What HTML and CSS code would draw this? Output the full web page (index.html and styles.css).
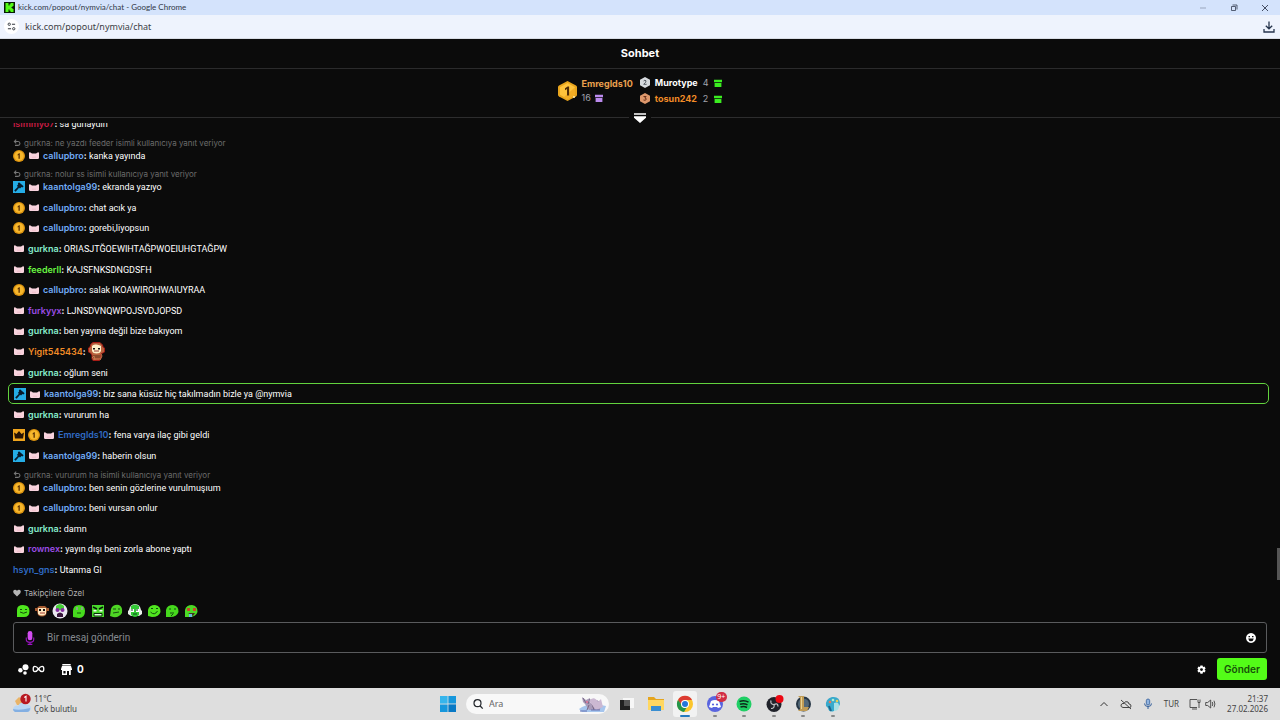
FILE: index.html
```html
<!DOCTYPE html>
<html lang="tr">
<head>
<meta charset="utf-8">
<title>kick.com/popout/nymvia/chat</title>
<link rel="stylesheet" href="styles.css">
</head>
<body>
<svg class="sprite" aria-hidden="true">
  <symbol id="reply" viewBox="0 0 8 8"><path d="M1.5 2.5H5a1.9 1.9 0 0 1 0 3.9H2M3.2.7 1.4 2.5l1.8 1.8" fill="none" stroke="#777" stroke-width="1.1"/></symbol>
  <symbol id="coin" viewBox="0 0 12 12"><circle cx="6" cy="6" r="6" fill="#dd9410"/><circle cx="6" cy="6" r="4.7" fill="#f7b72c"/><path d="M4.6 4.4 6 3.3h.8v5.4H5.5V5l-.9.5z" fill="#5a3005"/></symbol>
  <symbol id="pig" viewBox="0 0 10 7"><path d="M0 1Q.1 0 1 .2L3 1.500h4L9 .2q.9-.2 1 .8v4.800Q10 7 8.800 7H1.200Q0 7 0 5.800z" fill="#f8d3dd"/><path d="M3 4.500h4V6H3z" fill="#f3c4d0"/></symbol>
  <symbol id="mod" viewBox="0 0 12 12"><path d="M0 0h12v12H0z" fill="#25ade6"/><path d="m6 1.200 4.600 4-1.100 1.200-1-.3L7 7.500l-.9-.7-3.500 4-1.400-1.200 3.700-3.800-1-.9 1.300-1.600-.4-.9z" fill="#071b2b"/></symbol>
  <symbol id="crown" viewBox="0 0 12 12"><path d="M0 0h12v12H0z" fill="#f0a51d"/><path d="m1 3.400 2.500 1.700L6 2l2.500 3.100L11 3.400 10 9.500H2z" fill="#281403"/></symbol>
  <symbol id="gift" viewBox="0 0 8 8"><path d="M0 .8h8v2.400H0zM.6 3.900h6.800V8H.6z"/></symbol>
</svg>

<header class="titlebar">
  <svg class="favicon" viewBox="0 0 11 11"><path d="M0 0h11v11H0z" fill="#071c05"/><path d="M1.500 1h3v2.500h1V2.300h1V1h3v3h-1v1h-1v1h1v1h1v3h-3V8.700h-1V7.500h-1V10h-3z" fill="#53fc18"/></svg>
  <span class="window-title">kick.com/popout/nymvia/chat - Google Chrome</span>
  <div class="window-buttons">
    <button aria-label="Simge durumuna küçült"><svg viewBox="0 0 8 8"><path d="M1 4h6" stroke="#9aa6bd" fill="none"/></svg></button>
    <button aria-label="Geri yükle"><svg viewBox="0 0 8 8"><path d="M1.500 2.500h4v4h-4zM2.500 1h4.500v4.500" stroke="#333c50" stroke-width=".8" fill="none"/></svg></button>
    <button aria-label="Kapat"><svg viewBox="0 0 8 8"><path d="m1 1 6 6m0-6L1 7" stroke="#333c50" stroke-width=".9" fill="none"/></svg></button>
  </div>
</header>
<div class="addressbar">
  <button class="site-info" aria-label="Site bilgileri"><svg viewBox="0 0 10 10"><path d="M5.500 2.500H9M1 7.500h3.500" stroke="#30343b" stroke-width="1.100"/><circle cx="2.500" cy="2.500" r="1.300" fill="none" stroke="#30343b"/><circle cx="7.500" cy="7.500" r="1.300" fill="none" stroke="#30343b"/></svg></button>
  <span class="address">kick.com/popout/nymvia/chat</span>
  <button class="download" aria-label="İndirilenler"><svg viewBox="0 0 12 12"><path d="M6 .5v7M2.800 4.700 6 7.800l3.200-3.100M1 8v3h10V8" fill="none" stroke="#26354d" stroke-width="1.300"/></svg></button>
</div>

<main class="app">
  <h1 class="app-title">Sohbet</h1>
  <section class="leaders" aria-label="Hediye sıralaması">
    <div class="first">
      <svg class="hex-large" viewBox="0 0 19 20"><path d="M9.500 0 18 4.600q1 .6 1 1.500v7.800q0 .9-1 1.500L9.500 20 1 15.400q-1-.6-1-1.500V6.100q0-.9 1-1.500z" fill="#e9a51d"/><path d="m9.500 2 7.500 4.200v7.600L9.500 18 2 13.800V6.200z" fill="#ffc33c"/><path d="m9.500 18 7.500-4.200V6.200L6 15.900z" fill="#f3ad24"/><path d="M7 7.300 9.700 5.500h1.400v9H9V8L7 9.200z" fill="#4e2b06"/><circle cx="16" cy="16" r="1" fill="#fff0b8"/></svg>
      <div><div class="leader-name gold">Emreglds10</div><div class="leader-count">16 <svg class="gift violet"><use href="#gift"/></svg></div></div>
    </div>
    <div class="others">
      <svg class="hex" viewBox="0 0 10 11"><path d="m5 0 5 2.700v5.600L5 11 0 8.300V2.700z" fill="#d7dbdf"/><path d="M3.600 4q1.400-1.500 2.400-.2.600 1-2.300 3.500h2.900" fill="none" stroke="#555c63"/></svg>
      <span class="leader-name">Murotype</span><span class="leader-count">4</span><svg class="gift green"><use href="#gift"/></svg>
      <svg class="hex" viewBox="0 0 10 11"><path d="m5 0 5 2.700v5.600L5 11 0 8.300V2.700z" fill="#dd986c"/><path d="M3.500 3.500h2.600L4.800 5q2 .2 1.300 1.700-.9 1-2.600.3" fill="none" stroke="#6b321b"/></svg>
      <span class="leader-name orange">tosun242</span><span class="leader-count">2</span><svg class="gift green"><use href="#gift"/></svg>
    </div>
  </section>
  <div class="divider"><button aria-label="Sıralamayı genişlet"><svg viewBox="0 0 12 10"><path d="M0 .3h12v1.500H0zM0 3.200h12v1.500L6 10 0 4.700z" fill="#fff"/></svg></button></div>

  <section class="chat" aria-label="Mesajlar">
    <ol class="messages">
      <li><p><b class="crimson">isimmyo7</b><b>:</b> sa günaydın</p></li>
      <li><p class="reply"><svg><use href="#reply"/></svg>gurkna: ne yazdı feeder isimli kullanıcıya yanıt veriyor</p><p><svg class="badge"><use href="#coin"/></svg><svg class="pig"><use href="#pig"/></svg><b class="blue">callupbro</b><b>:</b> kanka yayında</p></li>
      <li><p class="reply"><svg><use href="#reply"/></svg>gurkna: nolur ss isimli kullanıcıya yanıt veriyor</p><p><svg class="badge"><use href="#mod"/></svg><svg class="pig"><use href="#pig"/></svg><b class="blue">kaantolga99</b><b>:</b> ekranda yazıyo</p></li>
      <li><p><svg class="badge"><use href="#coin"/></svg><svg class="pig"><use href="#pig"/></svg><b class="blue">callupbro</b><b>:</b> chat acık ya</p></li>
      <li><p><svg class="badge"><use href="#coin"/></svg><svg class="pig"><use href="#pig"/></svg><b class="blue">callupbro</b><b>:</b> gorebi,liyopsun</p></li>
      <li><p><svg class="pig"><use href="#pig"/></svg><b class="mint">gurkna</b><b>:</b> ORIASJTĞOEWIHTAĞPWOEIUHGTAĞPW</p></li>
      <li><p><svg class="pig"><use href="#pig"/></svg><b class="lime">feederll</b><b>:</b> KAJSFNKSDNGDSFH</p></li>
      <li><p><svg class="badge"><use href="#coin"/></svg><svg class="pig"><use href="#pig"/></svg><b class="blue">callupbro</b><b>:</b> salak IKOAWIROHWAIUYRAA</p></li>
      <li><p><svg class="pig"><use href="#pig"/></svg><b class="purple">furkyyx</b><b>:</b> LJNSDVNQWPOJSVDJOPSD</p></li>
      <li><p><svg class="pig"><use href="#pig"/></svg><b class="mint">gurkna</b><b>:</b> ben yayına değil bize bakıyom</p></li>
      <li><p><svg class="pig"><use href="#pig"/></svg><b class="orange">Yigit545434</b><b>:</b> <svg class="monkey" viewBox="0 0 17 19"><path d="M3 2 5 .5h7L14.500 3l.5 2 1.500 1v4l-1.800 1L13 12v4l-1.500 2.500H5L4 17v-4L2.500 11 .5 10V6L2 5z" fill="#b9623e" stroke="#a71c16"/><path d="M4 4q1-2 4.500-1.500T13 4v5q-1 2.500-4.500 2.500T4 9z" fill="#fff0c9"/><path d="M5 6h2v1.500H5zm5 0h2v1.500h-2z" fill="#171214"/><path d="M6 9h5" stroke="#943633"/><path d="M5 13h7v3H5z" fill="#8b4b2c"/><path d="m4 16 2-2 1 4m6-6 1 2-2 4" fill="none" stroke="#c67a50"/></svg></p></li>
      <li><p><svg class="pig"><use href="#pig"/></svg><b class="mint">gurkna</b><b>:</b> oğlum seni</p></li>
      <li class="mention"><p><svg class="badge"><use href="#mod"/></svg><svg class="pig"><use href="#pig"/></svg><b class="blue">kaantolga99</b><b>:</b> biz sana küsüz hiç takılmadın bizle ya @nymvia</p></li>
      <li><p><svg class="pig"><use href="#pig"/></svg><b class="mint">gurkna</b><b>:</b> vururum ha</p></li>
      <li><p><svg class="badge"><use href="#crown"/></svg><svg class="badge"><use href="#coin"/></svg><svg class="pig"><use href="#pig"/></svg><b class="royal">Emreglds10</b><b>:</b> fena varya ilaç gibi geldi</p></li>
      <li><p><svg class="badge"><use href="#mod"/></svg><svg class="pig"><use href="#pig"/></svg><b class="blue">kaantolga99</b><b>:</b> haberin olsun</p></li>
      <li><p class="reply"><svg><use href="#reply"/></svg>gurkna: vururum ha isimli kullanıcıya yanıt veriyor</p><p><svg class="badge"><use href="#coin"/></svg><svg class="pig"><use href="#pig"/></svg><b class="blue">callupbro</b><b>:</b> ben senin gözlerine vurulmuşıum</p></li>
      <li><p><svg class="badge"><use href="#coin"/></svg><svg class="pig"><use href="#pig"/></svg><b class="blue">callupbro</b><b>:</b> beni vursan onlur</p></li>
      <li><p><svg class="pig"><use href="#pig"/></svg><b class="mint">gurkna</b><b>:</b> damn</p></li>
      <li><p><svg class="pig"><use href="#pig"/></svg><b class="purple">rownex</b><b>:</b> yayın dışı beni zorla abone yaptı</p></li>
      <li><p><b class="royal">hsyn_gns</b><b>:</b> Utanma Gl</p></li>
    </ol>
    <span class="scroll-thumb"></span>
  </section>

  <form class="composer">
    <p class="mode"><svg viewBox="0 0 8 8"><path d="M4 7.500.7 4.200C-1 1.500 2-.5 4 1.700 6-.5 9 1.500 7.300 4.200z" fill="#b5b5b5"/></svg>Takipçilere Özel</p>
    <div class="emotes">
      <button type="button" aria-label="Gülümseme"><svg viewBox="0 0 14 14"><path d="M1 13V6q0-5 6-5 6.500 0 6.500 6T8 13z" fill="#4ee61d"/><path d="M4 5.500h2m3 0h2M4 8q3.500 2.500 7 0" stroke="#164c0d" fill="none"/></svg></button>
      <button type="button" aria-label="Maymun"><svg viewBox="0 0 14 14"><path d="M0 4h2l2-2h6l2 2h2v3h-2l-1 4q-4 3-8 0L2 7H0z" fill="#a55b31"/><path d="M3 4h8v6q-4 3-8 0z" fill="#ffe6bd"/><path d="M4 5h2v2H4zm4 0h2v2H8z" fill="#171011"/><path d="M5 9h5" stroke="#a43d32"/></svg></button>
      <button type="button" aria-label="Şaşkın"><svg viewBox="0 0 14 14"><circle cx="7" cy="7" r="7.500" fill="#e9e7ef"/><path d="M3 2q4-4 8 0v4H3z" fill="#46cf37"/><circle cx="4.500" cy="6" r="2" fill="#812c9d"/><circle cx="9.500" cy="6" r="2" fill="#812c9d"/><path d="M4 10q3-3 6 0v3H4z" fill="#36153a"/></svg></button>
      <button type="button" aria-label="Bakan"><svg viewBox="0 0 14 14"><path d="M1 13V7q0-6 6-6 6 0 6 6 0 7-6 7z" fill="#46db1d"/><path d="M4 3h2v3H4zm5 0h2v3H9z" fill="#fff"/><path d="M5 3v3m5-3v3M5 9h4" stroke="#104e0c"/></svg></button>
      <button type="button" aria-label="Kızgın"><svg viewBox="0 0 14 14"><path d="M1 1h12v12H1z" fill="#49d92c"/><path d="m2 3 4 2m6-2L8 5" stroke="#081b09" stroke-width="1.500"/><path d="M2.500 6h3v1.500h-3zm6 0h3v1.500h-3z" fill="#f2fff0"/><path d="M3 9.500h8V12H3z" fill="#e5ffe2" stroke="#082c08"/></svg></button>
      <button type="button" aria-label="Düşünceli"><svg viewBox="0 0 14 14"><path d="M1 12 2 5q2-5 8-4 4 2 3 8-3 5-9 4z" fill="#4ed624"/><path d="M4 5h3m2 0h2M4 9l6-1" stroke="#174d11"/></svg></button>
      <button type="button" aria-label="Kulaklıklı"><svg viewBox="0 0 14 14"><path d="M1 6q1-6 6-6t6 6l1 1v3l-3 2H3L0 10V7z" fill="#e9f0e9"/><path d="M3 2q4-3 8 0v9q-4 4-8 0z" fill="#33c936"/><path d="M3 5h3v3H3zm5 0h3v3H8z" fill="#fff"/><path d="M4 5v2m5-2v2M5 10h4" stroke="#0d421b"/></svg></button>
      <button type="button" aria-label="Sırıtan"><svg viewBox="0 0 14 14"><path d="M1 12V6q1-5 7-5 6 1 5.500 7Q12 13 5 13z" fill="#50e61f"/><path d="M4 4.500h2m3 0h2M3.500 8q4 4 7-1" fill="none" stroke="#124c10"/></svg></button>
      <button type="button" aria-label="Eli yüzünde"><svg viewBox="0 0 14 14"><path d="M1 13V6q1-5 7-5 6 1 5.500 7Q12 13 5 13z" fill="#46d91d"/><path d="M4 5h2m3 0h2M5 9h4m-3 3 2-2" fill="none" stroke="#124c10"/></svg></button>
      <button type="button" aria-label="Âşık"><svg viewBox="0 0 14 14"><path d="M1 13V6q1-5 7-5 6 1 5.500 7Q12 13 5 13z" fill="#4cda25"/><path d="M3 4h3v3H3zm6 0h3v3H9z" fill="#c7482b"/><path d="M4 9h7l-2 3z" fill="#45351f"/><path d="M5 10h3v3H5z" fill="#66bddd"/></svg></button>
    </div>
    <div class="message-box">
      <svg class="microphone" viewBox="0 0 10 15"><rect x="2.500" y="0" width="5" height="10" rx="2.500" fill="#d34df1"/><path d="M1 7v2q0 3 4 3t4-3V7M5 12v2M2.500 14.300h5" fill="none" stroke="#9d13c4" stroke-width="1.200"/></svg>
      <input type="text" aria-label="Mesaj" placeholder="Bir mesaj gönderin">
      <button type="button" aria-label="İfade ekle"><svg viewBox="0 0 10 10"><path d="m3 .5 2-.4 2 .4 2 1.500.9 2v2L9 8 7 9.600l-2 .3-2-.3L1 8 .1 6V4L1 2z" fill="#fff"/><path d="M2.500 3h1.500v1.300H2.500zM6 3h1.500v1.300H6zM2.200 5.500h5.600Q7.300 8.200 5 8.200T2.200 5.500z" fill="#111"/></svg></button>
    </div>
    <div class="actions">
      <button type="button" class="stat" aria-label="Kimlik"><svg class="dots" viewBox="0 0 11 11"><circle cx="7.500" cy="3.300" r="3" fill="#fff"/><circle cx="2.400" cy="6.300" r="2.200" fill="#fff"/><circle cx="7" cy="9" r="1.800" fill="#fff"/></svg><svg class="infinity" viewBox="0 0 12 8"><path d="M6 4C3.500.5.700.6.700 4s2.800 3.500 5.300 0 5.300-3.400 5.300 0S8.500 7.500 6 4z" fill="none" stroke="#fff" stroke-width="1.300"/></svg></button>
      <button type="button" class="stat shop"><svg viewBox="0 0 11 11"><path d="M1.300 0h8.400v1.400H1.300zM1 2h9l1 3v1H9.800v5H8V7H6v4H1V6H0V5zm1.400 5v2.500h2.200V7z" fill="#fff" fill-rule="evenodd"/></svg><span>0</span></button>
      <button type="button" class="settings" aria-label="Sohbet ayarları"><svg viewBox="0 0 10 10"><path fill="#fff" fill-rule="evenodd" d="M3.800.5h2.400l.3 1.300.7.400 1.200-.4 1.200 2-1 .9v.7l1 .9-1.200 2-1.200-.4-.7.400-.3 1.300H3.800L3.500 8.300l-.7-.4-1.200.4-1.200-2 1-.9v-.7l-1-.9 1.200-2 1.200.4.7-.4zM5 3.500a1.600 1.600 0 1 0 0 3.200 1.600 1.600 0 0 0 0-3.200z"/></svg></button>
      <button type="submit" class="send">Gönder</button>
    </div>
  </form>
</main>

<footer class="taskbar">
  <button class="weather">
    <svg viewBox="0 0 20 20"><path d="m3 7 4-4 5 4-1 4H5z" fill="#e9b468"/><path d="M3 18q-4-3 0-6 2-1 3 0 3-6 8-1 5-1 5 4-1 3-4 3z" fill="#b9d7f5"/><path d="M3 18q-2-1-2-3 6 2 17-1 0 4-3 4z" fill="#83afe2"/><circle cx="13.500" cy="5" r="5.200" fill="#b81822"/><path d="M12.300 3.500 14 2.300v5.200" fill="none" stroke="#fff" stroke-width="1.100"/></svg>
    <span>11°C<br>Çok bulutlu</span>
  </button>
  <nav class="tasks" aria-label="Görev çubuğu">
    <button class="start" aria-label="Başlat"><svg viewBox="0 0 16 16"><path d="M0 0h7.600v7.600H0z" fill="#36b5ec"/><path d="M8.400 0H16v7.600H8.400zM0 8.400h7.600V16H0z" fill="#1697dc"/><path d="M8.400 8.400H16V16H8.400z" fill="#0879c5"/></svg></button>
    <label class="search"><svg viewBox="0 0 10 10"><circle cx="4.500" cy="4.200" r="3.500" fill="none" stroke="#25282d" stroke-width="1.200"/><path d="m7 6.700 2.700 2.900" stroke="#25282d" stroke-width="1.300"/></svg><input type="search" aria-label="Ara" placeholder="Ara"><svg class="cat" viewBox="0 0 30 17"><path d="M2 13q9-7 27-3l-2 6H5z" fill="#a6c5ed"/><path d="m5 1 4 3 4-2v5l7-3q5 2 3 10H12l-4-6-2-2z" fill="#a99bb9"/><path d="m6 2 3 5m4-4-2 5m1 1-2 5m5-6 2 6" stroke="#796885"/><path d="M12 5q5-6 9 1l3-3 2 8-7 3z" fill="#cbb8d2"/><path d="M3 15h7m4-1h9" stroke="#6571b0"/><circle cx="10" cy="6" r="1" fill="#e37092"/></svg></label>
    <div class="apps">
      <button aria-label="Görev görünümü"><svg viewBox="0 0 18 18"><path d="M6 3h11v10H6z" fill="#f7f7f7"/><path d="M3 5h10v10H3z" fill="#555"/><path d="M3 5h4v6h6v4H3z" fill="#202020"/></svg></button>
      <button aria-label="Dosya Gezgini"><svg viewBox="0 0 18 18"><path d="M1 2h6l2 2h8v11H1z" fill="#e5a51e"/><path d="M1 5h16v10H1z" fill="#ffd760"/><path d="M4 11h10v5H4z" fill="#398ed1"/></svg></button>
      <button class="active" aria-label="Chrome"><svg viewBox="0 0 18 18"><circle cx="9" cy="9" r="8" fill="#fbc52b"/><path d="M2 5a8 8 0 0 1 14 0H9L6 11z" fill="#dc3b32"/><path d="M2 5a8 8 0 0 0 6 12l4-7-4 3z" fill="#23964b"/><circle cx="9" cy="9" r="4" fill="#fff"/><circle cx="9" cy="9" r="3" fill="#2476da"/></svg></button>
      <button class="open" aria-label="Discord"><svg viewBox="0 0 18 18"><circle cx="9" cy="9" r="8" fill="#5964df"/><path d="M5 6q4-2 8 0l2 6-3 1-1-1H7l-1 1-3-1z" fill="#fff"/><circle cx="7" cy="9.500" r="1.100" fill="#5964df"/><circle cx="11" cy="9.500" r="1.100" fill="#5964df"/></svg><span class="count">9+</span></button>
      <button class="open" aria-label="Spotify"><svg viewBox="0 0 18 18"><circle cx="9" cy="9" r="7.500" fill="#20cf65"/><path d="M4.500 6.500q5-1.700 9 .7M5 9.300q4-1.400 7.500.6M5.500 12q3.500-1.200 6.500.5" fill="none" stroke="#0d291a" stroke-width="1.500"/></svg></button>
      <button class="open" aria-label="OBS"><svg viewBox="0 0 18 18"><circle cx="9" cy="9.500" r="7.500" fill="#20222a"/><path d="M9 9.500q-4 0-3-4M9 9.500q4-2 4 2M9 9.500q1 4-3 4" fill="none" stroke="#c6c6ca" stroke-width="1.200"/><circle cx="14.500" cy="4" r="4" fill="#ed0712"/></svg></button>
      <button class="open" aria-label="League of Legends"><svg viewBox="0 0 18 18"><circle cx="9.500" cy="9" r="7.500" fill="#273746"/><circle cx="9.500" cy="9" r="5.500" fill="#536878"/><path d="M4 1h6v11h5l-2 4H4l2-2V3z" fill="#c09b55"/><path d="M7 2h1v12H7z" fill="#ead391"/></svg></button>
      <button class="open" aria-label="Paint"><svg viewBox="0 0 18 18"><path d="M2 11Q1 4 8 2q8-1 8 7-1 4-4 2l-2 5q-5 2-6-3z" fill="#38a9cc"/><path d="M10 8q5-2 5 3t-5 5z" fill="#a9e0e6"/><circle cx="6" cy="7" r="1.300" fill="#ec7758"/><circle cx="9" cy="5" r="1.300" fill="#b1edcb"/><circle cx="13" cy="6" r="1.300" fill="#e5cc55"/><path d="m5 11 2 5" stroke="#1d668b" stroke-width="2"/></svg></button>
    </div>
  </nav>
  <div class="tray">
    <button aria-label="Gizli simgeler"><svg viewBox="0 0 12 12"><path d="m2.500 8 3.500-3.500L9.500 8" fill="none" stroke="#333"/></svg></button>
    <button aria-label="OneDrive"><svg viewBox="0 0 12 12"><path d="M3 9.500Q.5 9 1 7t3-1.500Q5 2.500 8 4l1 2q2 0 2 2t-2 1.500zM1 2l10 9" fill="none" stroke="#444"/></svg></button>
    <button aria-label="Mikrofon"><svg viewBox="0 0 12 12"><rect x="4.300" y="1" width="3.400" height="6" rx="1.700" fill="#92b4df" stroke="#315c99" stroke-width=".8"/><path d="M2.500 5.500q0 3 3.500 3t3.500-3M6 8.500V11" fill="none" stroke="#315c99"/></svg></button>
    <button class="language">TUR</button>
    <button class="network" aria-label="Ağ ve ses"><svg viewBox="0 0 12 12"><path d="M8 1.500H1v8h7M3 11h5m1-9.500v3h2v-3m-1 3V10" fill="none" stroke="#444" stroke-width=".9"/></svg><svg viewBox="0 0 12 12"><path d="M.7 4.500h2l3-2.500v8l-3-2.500h-2zM7.300 4q1 2 0 4M9 2.700q1.800 3.300 0 6.600" fill="none" stroke="#444" stroke-width=".9"/></svg></button>
    <button class="clock">21:37<br>27.02.2026</button>
  </div>
</footer>
</body>
</html>
```
FILE: styles.css
```css
* { box-sizing: border-box; }
body {
  margin: 0;
  height: 100vh;
  display: flex;
  flex-direction: column;
  overflow: hidden;
  background: #0b0b0b;
  color: #fff;
  font: 9px/12px Inter, "Noto Sans", sans-serif;
}
button, input { font: inherit; color: inherit; border: 0; padding: 0; margin: 0; background: none; }
input { outline: 0; min-width: 0; }
p, h1, ol { margin: 0; padding: 0; }
svg { display: block; flex: none; overflow: visible; }
.sprite { position: absolute; width: 0; height: 0; }

.titlebar { display: flex; align-items: center; height: 15px; flex: none; padding: 0 11px 0 4px; gap: 3px; background: #d4e3fc; color: #303746; font: 8px/15px Lato, "Noto Sans", sans-serif; }
.favicon { width: 11px; height: 11px; }
.window-buttons { display: flex; gap: 23px; margin-left: auto; }
.window-buttons svg { width: 8px; height: 8px; }
.addressbar { display: flex; align-items: center; height: 24px; flex: none; padding: 0 5px 0 4px; gap: 6px; background: #eef3fd; border-bottom: 1px solid #d8dce4; color: #3b3e45; font: 9px/22px "Noto Sans", sans-serif; }
.site-info { width: 15px; height: 15px; border-radius: 50%; background: #fff; display: grid; place-items: center; }
.site-info svg { width: 9px; height: 9px; }
.download { margin-left: auto; }
.download svg { width: 12px; height: 12px; }

.app { flex: 1; min-height: 0; display: flex; flex-direction: column; }
.app-title { flex: none; border-bottom: 1px solid #2b2b2c; text-align: center; font-size: 11px; line-height: 29px; font-weight: 700; }
.leaders { flex: none; height: 43px; display: flex; justify-content: center; align-items: center; gap: 7px; }
.first { display: flex; align-items: center; gap: 4px; }
.hex-large { width: 19px; height: 20px; }
.leader-name { font-size: 9px; line-height: 14px; font-weight: 700; }
.leader-count { display: flex; align-items: center; gap: 4px; color: #a1a3ad; font-size: 9px; line-height: 13px; }
.others { display: grid; grid-template-columns: 10px auto auto 8px; column-gap: 5px; row-gap: 2px; align-items: center; }
.hex { width: 10px; height: 11px; }
.gift { width: 8px; height: 8px; }
.violet { fill: #bb8aed; }
.green { fill: #3bed20; }
.gold { color: #eaa04e; }
.orange { color: #f28b27; }
.divider { flex: none; height: 11px; display: flex; align-items: center; gap: 5px; }
.divider::before, .divider::after { content: ""; height: 1px; flex: 1; background: #2d2d2e; }
.divider svg { width: 12px; height: 10px; }

.chat { flex: 1; min-height: 0; position: relative; overflow: hidden; }
.messages { list-style: none; height: 100%; padding: 0 11px 5px 8px; display: flex; flex-direction: column; justify-content: space-between; }
.messages li:first-child { margin-top: -9px; }
.messages li { flex: none; padding: 4px 5px; }
.messages li > p { display: flex; align-items: center; height: 12px; white-space: pre; font-family: Roboto, "Noto Sans", sans-serif; }
.messages li > .reply { height: 11px; align-items: flex-start; color: #6c6c6c; font-family: Inter, "Noto Sans", sans-serif; font-size: 8px; line-height: 9px; gap: 3px; }
.reply svg { width: 8px; height: 8px; }
.messages .mention { padding: 4px 5px 3px; border: 1px solid #62d33e; border-radius: 5px; }
.badge { width: 12px; height: 12px; margin-right: 3px; }
.pig { width: 10px; height: 7px; margin: 0 4px 0 1px; }
.monkey { width: 17px; height: 19px; margin-left: 2px; }
.messages b { font-family: Inter, "Noto Sans", sans-serif; font-weight: 600; }
.crimson { color: #c51c43; }
.blue { color: #70aaf5; }
.mint { color: #87edcd; }
.lime { color: #69f542; }
.purple { color: #9c4de6; }
.royal { color: #306bc5; }
.scroll-thumb { position: absolute; right: 0; top: 92%; width: 3px; height: 32px; background: #555; }

.composer { flex: none; padding: 2px 13px 3px; }
.mode { display: flex; align-items: center; gap: 3px; height: 12px; color: #b2b2b2; font-size: 8px; }
.mode svg { width: 8px; height: 8px; }
.emotes { display: flex; justify-content: space-between; width: 185px; height: 23px; align-items: center; padding-left: 3px; }
.emotes svg { width: 14px; height: 14px; }
.message-box { display: flex; align-items: center; height: 31px; border: 1px solid #5a5b5d; border-radius: 3px; padding: 0 10px; font: 10px/12px Roboto, "Noto Sans", sans-serif; }
.microphone { width: 12px; height: 14px; }
.message-box input { flex: 1; margin-left: 11px; }
.message-box input::placeholder { color: #858a90; opacity: 1; }
.message-box button svg { width: 10px; height: 10px; }
.actions { display: flex; align-items: center; height: 32px; font-size: 10px; }
.stat { display: flex; align-items: center; gap: 3px; margin-left: 5px; }
.stat svg { width: 11px; height: 11px; }
.stat .infinity { width: 13px; height: 8px; }
.shop { margin-left: 16px; gap: 5px; font-weight: 700; }
.settings { margin-left: auto; margin-right: 11px; }
.settings svg { width: 9px; height: 9px; }
.send { min-width: 50px; height: 22px; border-radius: 3px; background: #53fc18; color: #174f09; font-weight: 600; }

.taskbar { flex: none; height: 32px; display: grid; grid-template-columns: 1fr auto 1fr; align-items: center; padding: 0 12px; background: #dedede; color: #444; font: 8px/10px "Noto Sans", sans-serif; }
.weather { display: flex; align-items: center; gap: 2px; text-align: left; justify-self: start; }
.weather svg { width: 20px; height: 20px; }
.tasks { display: flex; align-items: center; padding-left: 5px; }
.start { margin-right: 10px; }
.start svg { width: 16px; height: 16px; }
.search { width: 143px; height: 20px; border-radius: 10px; background: #f8f8f8; display: flex; align-items: center; padding: 0 2px 0 7px; font-size: 9px; margin-right: 5px; }
.search > svg { width: 10px; height: 10px; }
.search input { flex: 1; margin-left: 6px; }
.search input::placeholder { color: #666; opacity: 1; }
.search .cat { width: 30px; height: 17px; }
.apps { width: 231px; display: flex; justify-content: space-between; }
.apps button { position: relative; width: 24px; height: 26px; display: grid; place-items: center; border-radius: 3px; }
.apps svg { width: 18px; height: 18px; }
.apps .active { background: #f2f2f2; }
.apps .active::after, .apps .open::after { content: ""; position: absolute; bottom: 0; width: 4px; height: 2px; border-radius: 1px; background: #888; }
.apps .active::after { width: 10px; background: #247abf; }
.count { position: absolute; right: 0; top: 1px; width: 11px; height: 10px; border-radius: 5px; background: #d12d43; color: #fff; font-size: 7px; line-height: 10px; }
.tray { display: flex; align-items: center; justify-content: flex-end; gap: 10px; }
.tray svg { width: 12px; height: 12px; }
.network { display: flex; gap: 4px; }
.clock { text-align: right; }
```
